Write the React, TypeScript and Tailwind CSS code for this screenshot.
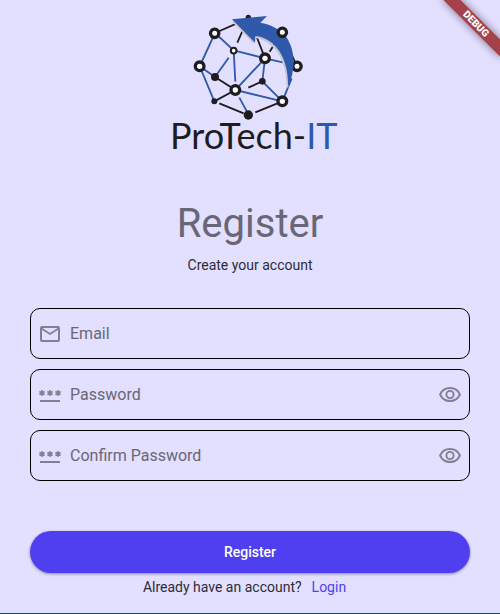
import type { ReactNode } from 'react';

const BLUE = '#2f5aab';
const INK = '#1d1d1f';

function Logo() {
  return (
    <svg
      viewBox="0 0 180 152"
      className="h-[152px] w-[180px]"
      role="img"
      aria-label="ProTech-IT"
    >
      <g transform="translate(25 0) scale(0.33333)">
        <g stroke={INK} strokeWidth="5.5" fill="none">
          <path d="M90 84L190 40M175 72L157 113M213 90L240 160M268 118L254 140M300 104L332 176" />
          <path d="M90 216L151 255L88 289M103 295L176 325M211 322L292 289M190 248L232 229" />
        </g>
        <g stroke={BLUE} strokeWidth="5.5" fill="none">
          <path d="M90 84L44 184L88 289M90 84L146 136L151 230M146 136L240 160L310 176" />
          <path d="M131 158L90 216L44 184M240 160L151 255L292 289L232 229L240 160M320 220L292 289M163 278L186 320" />
        </g>
        <g fill={INK}>
          <circle cx="190" cy="37" r="8" />
          <circle cx="90" cy="216" r="12" />
          <circle cx="88" cy="289" r="9" />
          <circle cx="232" cy="229" r="10" />
          <circle cx="190" cy="330" r="14" />
        </g>
        <g fill="#ffffff" stroke={INK} strokeWidth="10">
          <circle cx="89" cy="85" r="12.5" />
          <circle cx="44" cy="184" r="13" />
          <circle cx="336" cy="184" r="12.5" />
          <circle cx="240" cy="160" r="13" />
          <circle cx="151" cy="255" r="13" />
          <circle cx="292" cy="289" r="13" />
          <circle cx="146" cy="137" r="8.5" strokeWidth="6" />
        </g>
        <path
          d="M138 47L206 117L209 98C256 106 306 150 304 248L312 246L308 150L214 80Z"
          fill="#c9c7d6"
        />
        <path
          d="M141 43L246 33L226 53C256 58 284 72 302 94C330 130 334 190 309 248C312 160 272 100 211 93L210 113Z"
          fill={BLUE}
        />
        <circle cx="292" cy="82" r="12.5" fill="#ffffff" stroke={INK} strokeWidth="10" />
      </g>
      <text x="10" y="144" fontSize="36" fill={INK} fontFamily="Lato, sans-serif">
        ProTech-<tspan fill={BLUE}>IT</tspan>
      </text>
    </svg>
  );
}

function MailIcon() {
  return (
    <svg viewBox="0 0 24 24" className="size-6" fill="none" stroke="currentColor" aria-hidden="true">
      <rect x="3" y="5" width="18" height="14" rx="1" strokeWidth="2" />
      <path d="M3.5 6.5L12 12L20.5 6.5" strokeWidth="1.7" />
    </svg>
  );
}

function PasswordIcon() {
  return (
    <svg viewBox="0 0 24 24" className="size-6" stroke="currentColor" aria-hidden="true">
      <path d="M2 18H22" strokeWidth="2" />
      <path
        d="M4 7V13M1.4 8.5L6.6 11.5M1.4 11.5L6.6 8.5M12 7V13M9.4 8.5L14.6 11.5M9.4 11.5L14.6 8.5M20 7V13M17.4 8.5L22.6 11.5M17.4 11.5L22.6 8.5"
        strokeWidth="1.5"
      />
    </svg>
  );
}

function EyeIcon() {
  return (
    <svg viewBox="0 0 24 24" className="size-6" fill="none" stroke="currentColor" strokeWidth="1.9" aria-hidden="true">
      <path d="M2.1 11.5C3.8 7.6 7.5 5 12 5S20.2 7.6 21.9 11.5C20.2 15.4 16.5 18 12 18S3.8 15.4 2.1 11.5Z" />
      <circle cx="12" cy="11.5" r="3.6" />
    </svg>
  );
}

type FieldProps = {
  id: string;
  label: string;
  type: string;
  icon: ReactNode;
  revealable?: boolean;
};

function Field({ id, label, type, icon, revealable }: FieldProps) {
  return (
    <div className="flex h-[51px] items-center gap-2 rounded-[10px] border border-black px-[7px] text-[#827f92]">
      <label htmlFor={id} aria-label={label}>
        {icon}
      </label>
      <input
        id={id}
        type={type}
        placeholder={label}
        className="min-w-0 flex-1 bg-transparent text-base text-black outline-none placeholder:text-[#696776]"
      />
      {revealable && (
        <button type="button" aria-label={`Show ${label}`}>
          <EyeIcon />
        </button>
      )}
    </div>
  );
}

function DebugBanner() {
  return (
    <div className="absolute top-7 -right-10 flex h-3 w-20 origin-[50%_-28px] rotate-45 items-center justify-center bg-[#a4414b] text-[10px] leading-3 font-black text-white shadow-[0_0_8px_rgba(0,0,0,0.5)]">
      DEBUG
    </div>
  );
}

export default function App() {
  return (
    <main className="relative flex min-h-screen flex-col overflow-hidden border-b border-[#1f4457] bg-[#e2dfff] px-[30px] pt-[5px] font-['Roboto',sans-serif] text-[#2d2c37]">
      <DebugBanner />
      <header className="flex flex-col items-center">
        <Logo />
        <h1 className="mt-[41px] text-[40px] leading-[52px] text-[#696776]">Register</h1>
        <p className="mt-[5px] text-sm">Create your account</p>
      </header>
      <form className="mt-[33px] flex flex-col gap-2.5">
        <Field id="email" label="Email" type="email" icon={<MailIcon />} />
        <Field id="password" label="Password" type="password" icon={<PasswordIcon />} revealable />
        <Field id="confirm" label="Confirm Password" type="password" icon={<PasswordIcon />} revealable />
        <button
          type="submit"
          className="mt-10 h-[42px] rounded-full bg-[#4f3ff0] text-sm font-medium text-white shadow-[0_1px_3px_rgba(0,0,0,0.4)]"
        >
          Register
        </button>
      </form>
      <p className="mt-1 flex justify-center gap-2.5 pr-[11px] text-sm">
        Already have an account?
        <a href="#login" className="text-[#4f3ff0]">
          Login
        </a>
      </p>
    </main>
  );
}
